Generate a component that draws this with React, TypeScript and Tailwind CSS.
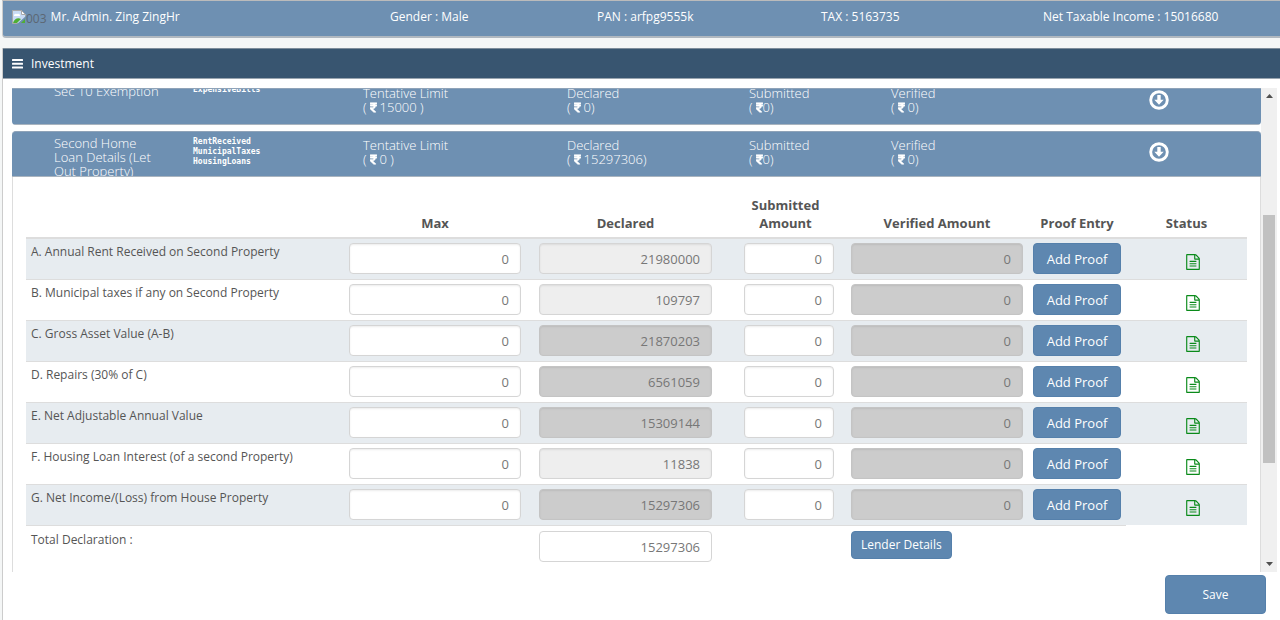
import React from 'react';
import { FaRupeeSign } from 'react-icons/fa';
import clsx from 'clsx';

interface Section {
  title: string;
  tags: string[];
  limit: string;
  declared: string;
}

interface Line {
  label: string;
  declared: string;
  locked: boolean;
}

const sections: Section[] = [
  { title: 'Sec 10 Exemption', tags: ['ExpensiveBills'], limit: '15000', declared: '0' },
  {
    title: 'Second Home Loan Details (Let Out Property)',
    tags: ['RentReceived', 'MunicipalTaxes', 'HousingLoans'],
    limit: '0',
    declared: '15297306',
  },
];

const lines: Line[] = [
  { label: 'A. Annual Rent Received on Second Property', declared: '21980000', locked: false },
  { label: 'B. Municipal taxes if any on Second Property', declared: '109797', locked: false },
  { label: 'C. Gross Asset Value (A-B)', declared: '21870203', locked: true },
  { label: 'D. Repairs (30% of C)', declared: '6561059', locked: true },
  { label: 'E. Net Adjustable Annual Value', declared: '15309144', locked: true },
  { label: 'F. Housing Loan Interest (of a second Property)', declared: '11838', locked: false },
  { label: 'G. Net Income/(Loss) from House Property', declared: '15297306', locked: true },
];

const BarsIcon = () => (
  <svg width="11" height="10" viewBox="0 0 11 10" fill="#fff" aria-hidden="true">
    <rect width="11" height="2" rx="0.5" />
    <rect y="3.7" width="11" height="2" rx="0.5" />
    <rect y="7.4" width="11" height="2" rx="0.5" />
  </svg>
);

const ArrowDownCircle = () => (
  <svg width="20" height="20" viewBox="0 0 20 20" aria-hidden="true">
    <circle cx="10" cy="10" r="8.3" fill="none" stroke="#fff" strokeWidth="2.9" />
    <path d="M8.3 5h3.4v4.8h3L10 14.8 5.3 9.8h3z" fill="#fff" />
  </svg>
);

const FileIcon = () => (
  <svg width="14" height="16" viewBox="0 0 1536 1792" fill="#0a8a1a" aria-hidden="true">
    <path d="M1468 380q28 28 48 76t20 88v1152q0 40-28 68t-68 28H96q-40 0-68-28t-28-68V96q0-40 28-68T96 0h896q40 0 88 20t76 48zm-444-244v376h376q-10-29-22-41l-313-313q-12-12-41-22zm384 1528V640H992q-40 0-68-28t-28-68V128H128v1536h1280zM384 800q0-14 9-23t23-9h704q14 0 23 9t9 23v64q0 14-9 23t-23 9H416q-14 0-23-9t-9-23v-64zm736 224q14 0 23 9t9 23v64q0 14-9 23t-23 9H416q-14 0-23-9t-9-23v-64q0-14 9-23t23-9h704zm0 256q14 0 23 9t9 23v64q0 14-9 23t-23 9H416q-14 0-23-9t-9-23v-64q0-14 9-23t23-9h704z" />
  </svg>
);

const MissingPhoto = () => (
  <svg width="14" height="14" viewBox="0 0 14 14" aria-hidden="true">
    <path d="M0.5 0.5h9l4 4v9h-13z" fill="#c9dcf5" stroke="#a8a8a8" />
    <path d="M9.5 0.5v4h4z" fill="#fff" stroke="#a8a8a8" />
    <path d="M2 6a2 2 0 0 1 3-2 2 2 0 0 1 3 2z" fill="#fff" />
    <path d="M1 13c1-4 5-6 8-4l-4 4z" fill="#4fae33" />
    <path d="M5 14l9-8v8z" fill="#6e90b2" />
    <path d="M9 13l4-4v4z" fill="#4fae33" />
  </svg>
);

interface AmountProps {
  title: string;
  value: string;
  tight?: boolean;
}

const Amount = ({ title, value, tight }: AmountProps) => (
  <div className="pt-[6px]">
    <div>{title}</div>
    <div className="flex items-center">
      <span className="pr-[3px]">(</span>
      <FaRupeeSign className="h-[11px] w-[7px] shrink-0" stroke="currentColor" strokeWidth={24} />
      <span className={clsx(!tight && 'pl-[3px]')}>{value}</span>
    </div>
  </div>
);

const SectionBar = ({ section }: { section: Section }) => (
  <div className="grid h-[46px] grid-cols-[139fr_170fr_204fr_182fr_142fr_258fr_112fr] overflow-hidden rounded-t border-t border-b border-t-[#8fa3b8] border-b-[#a9b4bf] bg-[#6e90b2] pl-[42px] text-[13px] leading-[14px] font-light text-white">
    <div className="pt-1 pr-8">{section.title}</div>
    <div className="pt-[5px] font-['DejaVu_Sans_Mono',monospace] text-[8px] leading-[10px] font-bold">
      {section.tags.map((tag) => (
        <div key={tag}>{tag}</div>
      ))}
    </div>
    <Amount title="Tentative Limit" value={`${section.limit} )`} />
    <Amount title="Declared" value={`${section.declared})`} />
    <Amount title="Submitted" value="0)" tight />
    <Amount title="Verified" value="0)" />
    <div className="pt-[10px]">
      <button type="button" aria-label="Toggle section" className="block h-5 w-5">
        <ArrowDownCircle />
      </button>
    </div>
  </div>
);

interface FieldProps {
  label: string;
  value: string;
  tone?: 'white' | 'light' | 'dark';
}

const Field = ({ label, value, tone = 'white' }: FieldProps) => (
  <input
    type="text"
    aria-label={label}
    defaultValue={value}
    readOnly={tone !== 'white'}
    className={clsx(
      'block h-[31px] w-full rounded border pr-[11px] text-right text-[13px] text-[#777] shadow-[inset_0_1px_2px_rgba(0,0,0,0.08)] outline-none',
      tone === 'white' && 'border-[#d5d5d5] bg-white',
      tone === 'light' && 'border-[#d5d5d5] bg-[#eee]',
      tone === 'dark' && 'border-[#c4c4c4] bg-[#ccc]',
    )}
  />
);

export default function App() {
  return (
    <div className="min-h-screen overflow-hidden bg-[#f4f6f6] pl-[2px] font-['Open_Sans',sans-serif] text-[12px] leading-[18px] text-[#555]">
      <header className="grid h-[38px] grid-cols-[378fr_207fr_224fr_222fr_237fr] items-center rounded-bl border-t border-b-2 border-l border-t-[#bbb] border-b-[#b0b8c0] border-l-[#ccc] bg-[#6e90b2] pb-[3px] pl-[9px] text-white">
        <div className="flex items-center">
          <MissingPhoto />
          <span className="pt-[3px] pr-1 text-[#5c6773]">003</span>
          <span>Mr. Admin. Zing ZingHr</span>
        </div>
        <div>Gender : Male</div>
        <div>PAN : arfpg9555k</div>
        <div>TAX : 5163735</div>
        <div>Net Taxable Income : 15016680</div>
      </header>

      <main className="mt-[10px] min-h-[572px] border-l border-[#ccc] bg-white">
        <div className="flex h-[31px] items-center gap-2 border-t border-b border-t-[#7d8c9a] border-b-[#9aa5b0] bg-[#385570] pl-[9px] text-white">
          <BarsIcon />
          <h1>Investment</h1>
        </div>

        <div className="mt-[9px] mr-[3px] ml-[9px] flex h-[484px]">
          <div className="flex-1 overflow-hidden border-t border-[#8fa3b8]">
            <div className="-mt-[10px] mb-[6px] overflow-hidden rounded-b">
              <SectionBar section={sections[0]} />
            </div>
            <SectionBar section={sections[1]} />
            <div className="border-x border-[#ddd] px-[13px] pt-[14px] pb-8">
              <table className="w-full table-fixed border-separate border-spacing-0">
                <colgroup>
                  <col />
                  <col className="w-[182px]" />
                  <col className="w-[199px]" />
                  <col className="w-[121px]" />
                  <col className="w-[182px]" />
                  <col className="w-[98px]" />
                  <col className="w-[121px]" />
                </colgroup>
                <thead>
                  <tr className="align-bottom text-[13px] font-bold [&>*]:border-b [&>*]:border-[#ddd] [&>*]:px-5 [&>*]:py-[5px]">
                    <td />
                    <th>Max</th>
                    <th>Declared</th>
                    <th>Submitted Amount</th>
                    <th className="whitespace-nowrap">Verified Amount</th>
                    <th className="whitespace-nowrap !px-0">Proof Entry</th>
                    <th>Status</th>
                  </tr>
                </thead>
                <tbody className="align-top">
                  {lines.map((line) => (
                    <tr
                      key={line.label}
                      className="odd:bg-[#e7ecf0] [&>td]:border-t [&>td]:border-[#ddd] [&>td]:px-[5px] [&>td]:pt-1 [&>td]:pb-[5px]"
                    >
                      <td>{line.label}</td>
                      <td>
                        <Field label={`${line.label} max`} value="0" />
                      </td>
                      <td className="!px-[13px]">
                        <Field
                          label={`${line.label} declared`}
                          value={line.declared}
                          tone={line.locked ? 'dark' : 'light'}
                        />
                      </td>
                      <td className="!pr-3 !pl-[19px]">
                        <Field label={`${line.label} submitted`} value="0" />
                      </td>
                      <td>
                        <Field label={`${line.label} verified`} value="0" tone="dark" />
                      </td>
                      <td>
                        <button
                          type="button"
                          className="block h-[31px] w-full rounded border border-[#5580ab] bg-[#5e87b0] text-[13px] text-white"
                        >
                          Add Proof
                        </button>
                      </td>
                      <td className="!pt-[15px] !pl-[17px]">
                        <div className="flex justify-center">
                          <FileIcon />
                        </div>
                      </td>
                    </tr>
                  ))}
                  <tr className="[&>td]:border-t [&>td]:border-[#ddd] [&>td]:p-[5px]">
                    <td>
                      <label htmlFor="total">Total Declaration :</label>
                    </td>
                    <td />
                    <td className="!px-[13px]">
                      <input
                        id="total"
                        type="text"
                        defaultValue="15297306"
                        className="block h-[31px] w-full rounded border border-[#d5d5d5] bg-white pr-[11px] text-right text-[13px] text-[#777] outline-none"
                      />
                    </td>
                    <td />
                    <td>
                      <button
                        type="button"
                        className="block h-7 rounded border border-[#5580ab] bg-[#5e87b0] px-[9px] text-white"
                      >
                        Lender Details
                      </button>
                    </td>
                    <td />
                  </tr>
                </tbody>
              </table>
            </div>
          </div>

          <div className="flex w-[16px] flex-col items-center bg-[#f0f0f0] py-[6px]">
            <svg width="7" height="4" viewBox="0 0 7 4" fill="#505050" aria-hidden="true">
              <path d="M0 4 3.5 0 7 4z" />
            </svg>
            <div className="mt-[117px] h-[248px] w-[12px] bg-[#c1c1c1]" />
            <svg className="mt-auto" width="7" height="4" viewBox="0 0 7 4" fill="#505050" aria-hidden="true">
              <path d="M0 0 3.5 4 7 0z" />
            </svg>
          </div>
        </div>

        <div className="flex justify-end pt-[3px] pr-[14px]">
          <button
            type="button"
            className="h-[39px] w-[101px] rounded border border-[#5580ab] bg-[#5e87b0] text-white"
          >
            Save
          </button>
        </div>
      </main>
    </div>
  );
}
